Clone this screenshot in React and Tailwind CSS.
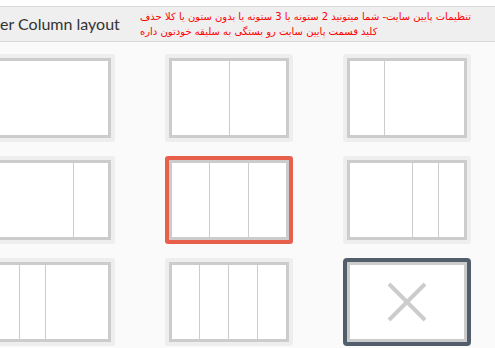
import React from "react";

function Cols({ dividers }) {
  const widths = [];
  let prev = 0;
  dividers.forEach((d) => {
    widths.push(d - prev);
    prev = d;
  });
  return (
    <div className="flex h-full w-full">
      {widths.map((w, i) => (
        <div
          key={i}
          className={i === 0 ? "h-full shrink-0" : "h-full shrink-0 border-l border-[#cccccc]"}
          style={{ width: w }}
        />
      ))}
      <div className={dividers.length ? "h-full flex-1 border-l border-[#cccccc]" : "h-full flex-1"} />
    </div>
  );
}

function Card({ dividers, variant, x }) {
  const outer =
    variant === "red"
      ? "bg-[#e8604c] p-[4px] rounded-[3px]"
      : variant === "dark"
      ? "bg-[#525e6c] p-[4px] rounded-[4px]"
      : "bg-[#eeeeee] p-[4px] rounded-[3px]";
  return (
    <div className={"w-[128px] h-[88px] " + outer}>
      <div className="w-[120px] h-[80px] border-[3px] border-[#cccccc] bg-white">
        {x ? (
          <div className="flex h-full w-full items-center justify-center">
            <svg width="40" height="40" viewBox="0 0 40 40">
              <path d="M2 2 L38 38 M38 2 L2 38" stroke="#cccccc" strokeWidth="4" fill="none" />
            </svg>
          </div>
        ) : (
          <Cols dividers={dividers} />
        )}
      </div>
    </div>
  );
}

export default function App() {
  const cards = [
    { d: [] },
    { d: [57] },
    { d: [34] },
    { d: [79] },
    { d: [37, 76], v: "red" },
    { d: [62, 88] },
    { d: [25, 51] },
    { d: [27, 56, 85] },
    { d: [], v: "dark", x: true },
  ];
  return (
    <div className="w-[495px] h-[348px] overflow-hidden bg-[#fafafa]">
      <div className="h-[6px] bg-white" />
      <div className="flex h-[36px] items-start border-y border-[#d9d9d9] bg-[#efefef]">
        <div
          className="w-[140px] shrink-0 pt-[6px] text-[16px] leading-[22px] text-[#333333] whitespace-nowrap"
          style={{ fontFamily: 'Lato, sans-serif' }}
        >
          er Column layout
        </div>
        <div
          dir="rtl"
          className="pt-[2px] text-left text-[10px] font-normal leading-[15px] text-[#ff0000] whitespace-nowrap"
          style={{ fontFamily: '"DejaVu Sans", sans-serif' }}
        >
          <div>تنظیمات پایین سایت- شما میتونید 2 ستونه یا 3 ستونه یا بدون ستون یا کلا حذف</div>
          <div>کلید قسمت پایین سایت رو بستگی به سلیقه خودتون داره</div>
        </div>
      </div>
      <div className="ml-[-13px] grid grid-cols-[128px_128px_128px] gap-x-[50px] gap-y-[14px] pt-[12px]">
        {cards.map((c, i) => (
          <Card key={i} dividers={c.d} variant={c.v} x={c.x} />
        ))}
      </div>
    </div>
  );
}
